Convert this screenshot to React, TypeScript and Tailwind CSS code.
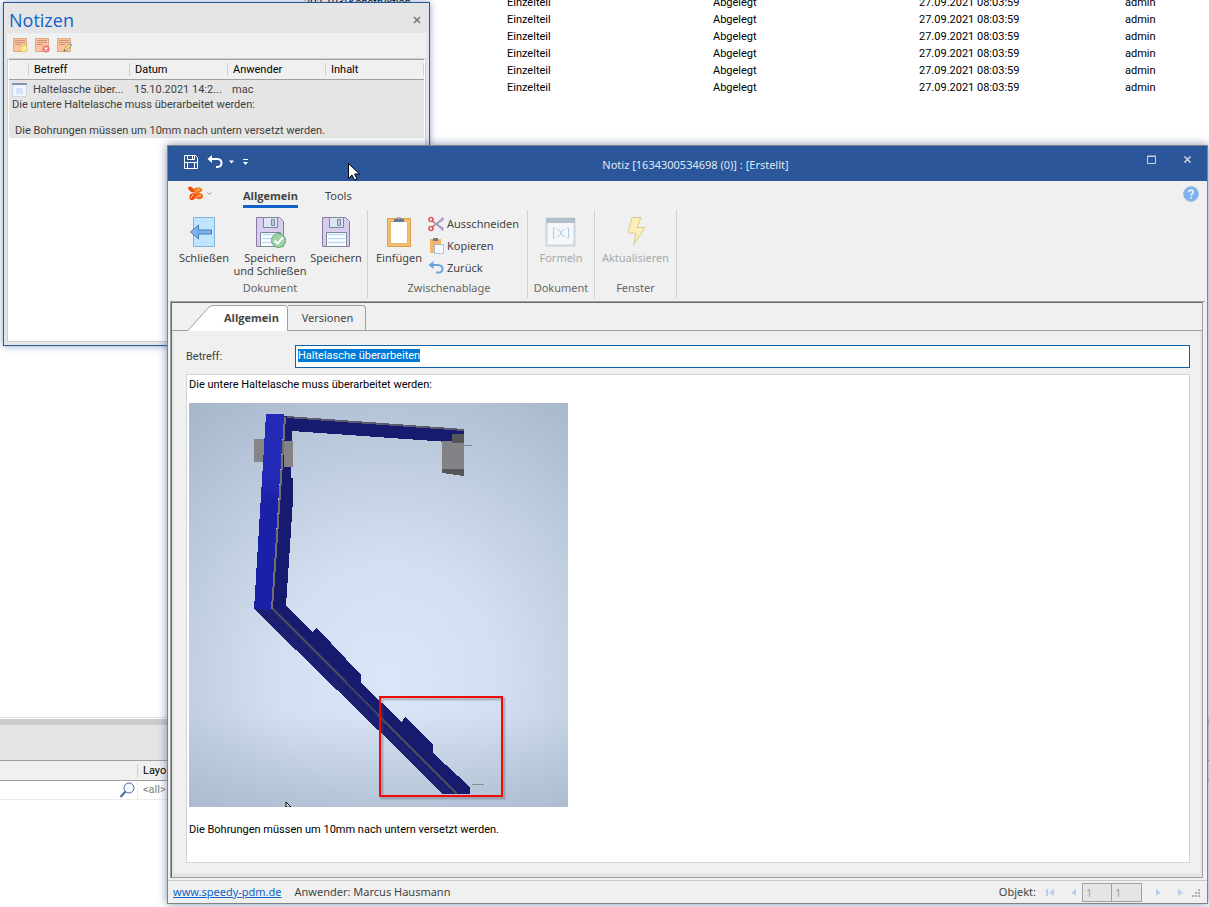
import { useEffect, useRef } from 'react';
import type { ReactNode } from 'react';

const parts = Array.from({ length: 6 }, (_, i) => ({
  folder: i === 0 ? '202.103\\Konstruktion' : '',
  type: 'Einzelteil',
  state: 'Abgelegt',
  date: '27.09.2021 08:03:59',
  user: 'admin',
}));

function PartsTable() {
  return (
    <table className="-mt-[6px] w-full table-fixed text-[11px] leading-[17px] text-black">
      <colgroup>
        <col className="w-[507px]" />
        <col className="w-[206px]" />
        <col className="w-[206px]" />
        <col className="w-[206px]" />
        <col />
      </colgroup>
      <tbody>
        {parts.map((part, index) => (
          <tr key={index} className="h-[17px]">
            <td className="pl-[304px]">{part.folder}</td>
            <td>{part.type}</td>
            <td>{part.state}</td>
            <td>{part.date}</td>
            <td>{part.user}</td>
          </tr>
        ))}
      </tbody>
    </table>
  );
}

function LayoutPane() {
  return (
    <section className="h-[190px] border-t border-[#e0e0e0] bg-white pt-px text-[11px]">
      <div className="h-[6px] bg-[#cbcbcb]" />
      <div className="h-[35px] bg-[#e5e5e5]" />
      <div className="flex h-[21px] border-y border-[#a0a0a0] bg-[#f0f0f0] py-[3px]">
        <div className="w-[138px] border-r border-[#d0d0d0]" />
        <span className="pl-[5px] leading-[14px] text-black">Layout</span>
      </div>
      <div className="flex h-[19px] border-b border-[#ececec]">
        <div className="flex w-[138px] justify-end border-r border-[#ececec] pr-[2px] pt-px">
          <svg className="h-4 w-4" viewBox="0 0 16 16" fill="none" stroke="#4c6ca0">
            <circle cx="10" cy="6" r="5" fill="#f4f7fc" />
            <path d="M6.5 9.5 1.5 15" strokeWidth="2" />
          </svg>
        </div>
        <span className="pl-[5px] leading-[18px] text-[#808080]">&lt;all&gt;</span>
      </div>
    </section>
  );
}

function NoteIcon({ kind }: { kind: 'new' | 'delete' | 'edit' }) {
  return (
    <svg className="h-4 w-4" viewBox="0 0 16 16">
      <path d="M1.5 1.5h13v13h-13z" fill="#fdc39b" stroke="#d9a98a" />
      <path d="M3 3.5h10M3 5.5h10M3 7.5h6" stroke="#c99478" />
      {kind === 'new' && (
        <path d="m12 8 2.5 1 1.3 2.5-1 2.5-2.6 1.5-2.6-1-1.4-2.7 1.2-2.6z" fill="#f8ec90" stroke="#d8bd62" strokeWidth=".7" />
      )}
      {kind === 'delete' && (
        <>
          <circle cx="12" cy="12" r="3.5" fill="#ee6b72" />
          <path d="m10.5 10.5 3 3m0-3-3 3" stroke="#fff" strokeWidth="1.2" />
        </>
      )}
      {kind === 'edit' && (
        <>
          <path d="m8 14 1-3 5-5 2 2-5 5z" fill="#f5da88" stroke="#a98d5c" strokeWidth=".7" />
          <path d="m13 7 1.2-1.2 2 2L15 9z" fill="#8fa6c8" />
          <path d="m7.6 14.4.6-1.8 1.2 1.2z" fill="#555" />
        </>
      )}
    </svg>
  );
}

const noteActions = [
  { kind: 'new', label: 'Neue Notiz' },
  { kind: 'delete', label: 'Notiz löschen' },
  { kind: 'edit', label: 'Notiz bearbeiten' },
] as const;

function NotesPanel() {
  return (
    <section className="absolute left-[3px] top-[2px] flex h-[344px] w-[427px] flex-col border border-[#2b579a] bg-[#e5e5e5] px-[3px] pb-[3px] shadow-[0_0_7px_rgba(43,87,154,0.55)]">
      <header className="flex h-[30px] items-center justify-between pl-[2px] pr-[3px]">
        <h2 className="pt-[3px] font-['Open_Sans',sans-serif] text-[18px] leading-6 text-[#0f63c9]">Notizen</h2>
        <button type="button" aria-label="Schließen" className="pt-[3px]">
          <svg className="h-3 w-3" viewBox="0 0 12 12" fill="none" stroke="#777" strokeWidth="1.600">
            <path d="m3 3 6 6m0-6-6 6" />
          </svg>
        </button>
      </header>
      <div className="flex h-[25px] items-center gap-[6px] bg-[#f0f0f0] pb-[2px] pl-[5px]">
        {noteActions.map((action) => (
          <button key={action.kind} type="button" aria-label={action.label}>
            <NoteIcon kind={action.kind} />
          </button>
        ))}
      </div>
      <div className="flex-1 border border-[#cfcfcf] bg-white px-px text-[11px]">
        <table className="w-full table-fixed border-t border-[#a0a0a0] bg-[#f0f0f0] text-left">
          <colgroup>
            <col className="w-[20px]" />
            <col className="w-[101px]" />
            <col className="w-[98px]" />
            <col className="w-[98px]" />
            <col />
          </colgroup>
          <thead>
            <tr className="h-5 leading-[13px] text-black">
              {['', 'Betreff', 'Datum', 'Anwender', 'Inhalt'].map((title) => (
                <th key={title} className="p-0 font-normal">
                  <span className="block h-[13px] border-r border-[#d0d0d0] pl-[5px]">{title}</span>
                </th>
              ))}
            </tr>
          </thead>
          <tbody className="border-t border-[#a0a0a0] bg-[#e5e5e5] text-[#404040]">
            <tr className="h-[18px] leading-[13px]">
              <td className="pl-[3px] pt-[2px]">
                <svg className="h-[14px] w-[15px]" viewBox="0 0 15 14">
                  <path d="M.5 1.5h14v12H.5z" fill="#eef5fe" stroke="#cdd6e2" />
                  <path d="M0 0h15v2H0z" fill="#8493ab" />
                  <path d="M4 5h7v6H4z" fill="#d2e3f9" />
                </svg>
              </td>
              <td className="truncate pl-1 pt-[2px]">Haltelasche über...</td>
              <td className="truncate pl-1 pt-[2px]">15.10.2021 14:2...</td>
              <td className="pl-1 pt-[2px]">mac</td>
              <td />
            </tr>
            <tr>
              <td colSpan={5} className="h-[40px] whitespace-pre pl-[3px] align-top leading-[13px]">
                <p>Die untere Haltelasche muss überarbeitet werden:</p>
                <p className="pl-[3px] pt-[13px]">Die Bohrungen müssen um 10mm nach untern versetzt werden.</p>
              </td>
            </tr>
          </tbody>
        </table>
      </div>
    </section>
  );
}

function TitleBar() {
  return (
    <header className="grid h-[35px] shrink-0 grid-cols-[1fr_auto_1fr] items-center bg-[#2b579a]">
      <div className="flex items-center pb-[3px] pl-[15px] text-white">
        <button type="button" aria-label="Speichern">
          <svg className="h-4 w-4" viewBox="0 0 16 16" fill="none" stroke="#fff">
            <path d="M1.5 1.5h11l2 2v11h-13zM4.5 1.5v4h7v-4M1.5 8.5h13M9.5 2v3M4.5 8.5v6M11.5 8.5v6" />
          </svg>
        </button>
        <button type="button" aria-label="Rückgängig" className="ml-2">
          <svg className="h-4 w-4" viewBox="0 0 16 16" fill="none" stroke="#fff" strokeWidth="2">
            <path d="M1.500 5h9q4 .3 4 4t-4 4H9" />
            <path d="M5 1v8L.5 5z" fill="#fff" stroke="none" />
          </svg>
        </button>
        <button type="button" aria-label="Verlauf" className="ml-[6px]">
          <svg className="h-2 w-[6px]" viewBox="0 0 6 8">
            <path d="M0 2.500h5L2.500 5.500z" fill="#fff" />
          </svg>
        </button>
        <button type="button" aria-label="Symbolleiste anpassen" className="ml-2">
          <svg className="h-2 w-[6px]" viewBox="0 0 6 8">
            <path d="M0 1h5v1H0zM0 4h5L2.500 7z" fill="#fff" />
          </svg>
        </button>
      </div>
      <h1 className="pl-4 pt-1 font-['Noto_Sans',sans-serif] text-[11px] text-[#dfe7f3]">
        Notiz [1634300534698 (0)] : [Erstellt]
      </h1>
      <div className="flex justify-end gap-6 pb-[7px] pr-[13px]">
        <button type="button" aria-label="Maximieren">
          <svg className="h-3 w-3" viewBox="0 0 12 12" fill="none" stroke="#d0d3d8">
            <path d="M1.500 2.500h8v7h-8zM1 2h9" />
          </svg>
        </button>
        <button type="button" aria-label="Schließen">
          <svg className="h-3 w-3" viewBox="0 0 12 12" fill="none" stroke="#d0d3d8" strokeWidth="1.600">
            <path d="m2.500 2.500 6 6m0-6-6 6" />
          </svg>
        </button>
      </div>
    </header>
  );
}

function RibbonTabs() {
  return (
    <nav className="flex h-[29px] items-start pl-5 pr-2 text-[11px]">
      <button type="button" aria-label="Menü" className="flex items-center gap-[3px] pt-[5px]">
        <svg className="h-4 w-4" viewBox="0 0 16 16">
          <path d="M0 1C3 0 6 1.500 7 6.500 3 6.500 0 4.500 0 1z" fill="#f04a0c" />
          <path d="M5.500 3C8 1 13 1 14 3c.8 2.500-2 4-6.500 4.500z" fill="#f57a16" />
          <path d="M1.500 11C1 8 4 6.500 8 7.500c.5 4-1.500 6.500-4 6.500s-2.300-1.300-2.500-3z" fill="#ef4a0a" />
          <path d="M7.500 7.500C12 6 15.500 7.500 15 10.500c-.4 2.500-4 3.500-7 2z" fill="#f4690f" />
          <path d="M8 5c1.500-1.300 3-1.800 4-1M3.500 12c-.3-1.800.8-2.800 2.500-3M9 10.500l4-1" stroke="#fbd3bd" fill="none" />
        </svg>
        <svg className="h-[6px] w-[5px]" viewBox="0 0 5 6" fill="none" stroke="#8a8a8a">
          <path d="m.5 1.500 2 2 2-2" />
        </svg>
      </button>
      <button type="button" className="ml-[31px] border-b-[3px] border-[#0f63c9] pb-[1px] pt-[7px] font-['Open_Sans',sans-serif] font-bold leading-4 text-[#444]">
        Allgemein
      </button>
      <button type="button" className="ml-[27px] pt-[7px] leading-4 text-[#444]">
        Tools
      </button>
      <button type="button" aria-label="Hilfe" className="ml-auto pt-[5px]">
        <svg className="h-4 w-4" viewBox="0 0 16 16">
          <circle cx="8" cy="8" r="7.500" fill="#7fb0ee" stroke="#a9bfdb" />
          <path d="M5.800 6.300c0-3 4.600-2.800 4.500-.1C10.200 7.800 8 7.800 8 9.500M8 11v1.500" fill="none" stroke="#fff" strokeWidth="1.500" />
        </svg>
      </button>
    </nav>
  );
}

function CloseIcon() {
  return (
    <svg className="h-8 w-8" viewBox="0 0 32 32">
      <path d="M5.500 1.500h21v29h-21z" fill="#bfe4fe" stroke="#80b3dd" />
      <path d="m2.500 16 8-7v5h13v4h-13v5z" fill="#7fb2f1" stroke="#4d79b4" />
    </svg>
  );
}

function SaveIcon({ checked = false }: { checked?: boolean }) {
  return (
    <svg className="h-8 w-8" viewBox="0 0 32 32">
      <path d="M2.500 1.500h23l4 4v25h-27z" fill="#d9cdef" stroke="#897ba5" />
      <path d="M9.500 1.500h14v10h-14z" fill="#dbe6f2" stroke="#7d8698" />
      <path d="M17.500 3.500h3v6h-3z" fill="#bacbe0" stroke="#7d8698" />
      <path d="M6.500 16.500h20v14h-20z" fill="#fff" stroke="#7d8698" />
      <path d="M8 18.500h17M8 22.500h17M8 26.500h17" stroke="#b9dcf4" strokeWidth="1.500" />
      {checked && (
        <>
          <circle cx="24.500" cy="24.500" r="7" fill="#9fd3a4" stroke="#5fa977" />
          <path d="m20.500 24.500 3 3 5.500-6" fill="none" stroke="#fff" strokeWidth="2" />
        </>
      )}
    </svg>
  );
}

function PasteIcon() {
  return (
    <svg className="h-8 w-8" viewBox="0 0 32 32">
      <path d="M4.500 2.500h23v28h-23z" fill="#f6bf6e" stroke="#dba04d" />
      <path d="M7.500 5.500h17v22h-17z" fill="#fff" stroke="#e2b478" />
      <path d="M11 6V3h3a2 2 0 0 1 4 0h3v3z" fill="#6a7b94" />
      <path d="M15.500 1.500h1V3h-1z" fill="#fff" />
    </svg>
  );
}

function FormulaIcon() {
  return (
    <svg className="h-8 w-8" viewBox="0 0 32 32" fill="none">
      <path d="M1.500 2.500h28v27h-28z" fill="#f5f7fa" stroke="#ced5dc" strokeWidth="2" />
      <path d="M1 2h29v5H1z" fill="#b2bec9" />
      <path d="M10 12H8.500v10H10M22 12h1.500v10H22M12 13.500c4-1 4 7.500 8 7M20 13.500c-4-1-4 7.500-8 7" stroke="#a9cbe9" />
    </svg>
  );
}

function BoltIcon() {
  return (
    <svg className="h-8 w-8" viewBox="0 0 32 32">
      <path d="M12 1.500h9l-4 10h8L13.500 29l2.500-12H8z" fill="#fbeeb9" stroke="#dccb92" />
    </svg>
  );
}

function CutIcon() {
  return (
    <svg className="h-4 w-4" viewBox="0 0 16 16" fill="none">
      <path d="M5 5.500 15 14.500V12zM5 10.500 15 1.500V4z" fill="#c3b5de" stroke="#9a8cba" />
      <circle cx="3" cy="3.500" r="2" stroke="#e0595e" strokeWidth="1.600" />
      <circle cx="3" cy="12.500" r="2" stroke="#e0595e" strokeWidth="1.600" />
      <path d="m4.500 5 2 2m-2 4 2-2" stroke="#e0595e" strokeWidth="1.500" />
    </svg>
  );
}

function CopyIcon() {
  return (
    <svg className="h-4 w-4" viewBox="0 0 16 16">
      <path d="M2 1h11v14H2z" fill="#f3b765" />
      <path d="M5 0h5v3H5z" fill="#6a7b94" />
      <path d="M6.500 6.500h9v9h-9z" fill="#f5faff" stroke="#87aed8" strokeDasharray="2 1" />
    </svg>
  );
}

function BackIcon() {
  return (
    <svg className="h-4 w-4" viewBox="0 0 16 16" fill="none" stroke="#6f9fdc" strokeWidth="2">
      <path d="M2 5h8q4.500.3 4.500 4T10 12.500H8" />
      <path d="M5.500 1v8L.5 5z" fill="#6f9fdc" stroke="none" />
    </svg>
  );
}

function RibbonGroup({ title, className, children }: { title: string; className: string; children: ReactNode }) {
  return (
    <section className={`flex flex-col justify-between border-r border-[#d2d2d2] pb-[2px] ${className}`}>
      <div className="flex">{children}</div>
      <h3 className="text-center leading-4 text-[#666]">{title}</h3>
    </section>
  );
}

function LargeButton({ icon, className, disabled, children }: { icon: ReactNode; className: string; disabled?: boolean; children: ReactNode }) {
  return (
    <button
      type="button"
      disabled={disabled}
      className={`flex flex-col items-center gap-[3px] whitespace-nowrap pt-[6px] leading-[13px] text-[#444] disabled:text-[#a8a8a8] ${className}`}
    >
      {icon}
      <span>{children}</span>
    </button>
  );
}

const clipboardActions = [
  { icon: CutIcon, text: 'Ausschneiden' },
  { icon: CopyIcon, text: 'Kopieren' },
  { icon: BackIcon, text: 'Zurück' },
];

function Ribbon() {
  return (
    <div className="flex h-[88px] shrink-0 text-[11px]">
      <RibbonGroup title="Dokument" className="w-[200px] pl-2 pr-[3px]">
        <LargeButton icon={<CloseIcon />} className="w-14">Schließen</LargeButton>
        <LargeButton icon={<SaveIcon checked />} className="w-[76px]">
          Speichern
          <br />
          und Schließen
        </LargeButton>
        <LargeButton icon={<SaveIcon />} className="w-14">Speichern</LargeButton>
      </RibbonGroup>
      <RibbonGroup title="Zwischenablage" className="w-[160px] pl-[3px]">
        <LargeButton icon={<PasteIcon />} className="w-14">Einfügen</LargeButton>
        <div className="flex flex-col pl-px pt-[3px]">
          {clipboardActions.map((action) => {
            const Icon = action.icon;
            return (
              <button key={action.text} type="button" className="flex h-[22px] items-center gap-[3px] text-[#444]">
                <Icon />
                {action.text}
              </button>
            );
          })}
        </div>
      </RibbonGroup>
      <RibbonGroup title="Dokument" className="w-[67px]">
        <LargeButton icon={<FormulaIcon />} className="w-full" disabled>Formeln</LargeButton>
      </RibbonGroup>
      <RibbonGroup title="Fenster" className="w-[82px]">
        <LargeButton icon={<BoltIcon />} className="w-full" disabled>Aktualisieren</LargeButton>
      </RibbonGroup>
    </div>
  );
}

function BracketDrawing() {
  return (
    <svg className="block h-[404px] w-[379px]" viewBox="0 0 379 404" role="img" aria-label="Haltelasche">
      <defs>
        <radialGradient id="sky" gradientUnits="userSpaceOnUse" cx="200" cy="275" r="340" gradientTransform="translate(200 275) scale(.95 1) translate(-200 -275)">
          <stop offset="0" stopColor="#dbe6f8" />
          <stop offset=".35" stopColor="#d3dff0" />
          <stop offset="1" stopColor="#a7b7cc" />
        </radialGradient>
        <linearGradient id="floor" x1="0" y1="0" x2="0" y2="1">
          <stop offset="0" stopColor="#a5b5ca" stopOpacity="0" />
          <stop offset="1" stopColor="#a5b5ca" stopOpacity=".65" />
        </linearGradient>
        <linearGradient id="beam" x1="0" y1="0" x2="0" y2="1">
          <stop offset=".3" stopColor="#232bb6" />
          <stop offset=".45" stopColor="#1a20a8" />
        </linearGradient>
      </defs>
      <path d="M0 0h379v404H0z" fill="url(#sky)" />
      <path d="M0 310h379v94H0z" fill="url(#floor)" />
      <g shapeRendering="crispEdges">
        <path d="M65 36h10v23H65z" fill="#85858a" />
        <path d="M95 13 275 26v13h-16L103 28v10l-1 26v11h2v22l-7 106-13 4z" fill="#171b70" />
        <path d="m98 14 177 13" stroke="#5a596f" strokeWidth="2" fill="none" />
        <path d="M95 38h9v26h-9z" fill="#828287" />
        <path d="M253 38h22v28h-22z" fill="#828287" />
        <path d="M263 31h12v9h-12zM253 66h22v7l-22-3z" fill="#55555a" />
        <path d="M275 42h8" stroke="#84868d" />
        <path d="m84 206 13-3 26 26 5-4 44 47v8l41 39 3-5 28 28v8l37 34v7h-13z" fill="#171b70" />
        <path d="M65 206h19l187 185h-18l-64-64z" fill="#1b2070" />
        <path d="m84 206 184 185" stroke="#484b59" strokeWidth="2" />
        <path d="M77 11h18v3L82 207l-17-1z" fill="url(#beam)" />
        <path d="M96 14 91 90 83 206" stroke="#716e74" strokeWidth="2" fill="none" />
        <path d="M283 381h12" stroke="#888b92" />
      </g>
      <path d="M193 296h122v99H193z" fill="none" stroke="#555" strokeOpacity=".3" strokeWidth="3" />
      <path d="M191 294h122v99H191z" fill="none" stroke="#f20808" strokeWidth="2" />
      <path d="M97 399v5h5z" fill="#fff" stroke="#000" />
    </svg>
  );
}

function NoteForm() {
  const subjectRef = useRef<HTMLInputElement>(null);

  useEffect(() => {
    subjectRef.current?.select();
  }, []);

  return (
    <div className="flex min-h-0 flex-1 flex-col border border-l-[#696969] border-r-[#a0a0a0] border-t-[#696969] border-b-[#a0a0a0]">
      <div className="flex h-[28px] shrink-0 items-end border-b border-[#a0a0a0] pl-[15px] font-['Noto_Sans',sans-serif] text-[11px] text-[#444]">
        <button type="button" className="relative -mb-px h-[26px] w-[101px] pl-[37px] text-left font-['Open_Sans',sans-serif] font-bold">
          <svg className="absolute inset-0 h-[26px] w-[101px]" viewBox="0 0 101 26">
            <path d="M.5 26 22 2Q24 .5 26 .5H98q2.500 0 2.500 3V26" fill="#fff" stroke="#a0a0a0" />
          </svg>
          <span className="relative">Allgemein</span>
        </button>
        <button type="button" className="h-[25px] w-[78px] rounded-tr-sm border-r border-t border-[#a0a0a0] pl-[2px]">
          Versionen
        </button>
      </div>
      <div className="flex min-h-0 flex-1 flex-col gap-[6px] border-x-2 border-b-4 border-[#e5e5e5] pb-[10px] pl-3 pr-[10px] pt-[14px] text-[11px]">
        <div className="flex items-center">
          <label htmlFor="subject" className="w-[109px] shrink-0 pt-[2px] text-[#404040]">Betreff:</label>
          <input
            ref={subjectRef}
            id="subject"
            type="text"
            defaultValue="Haltelasche überarbeiten"
            className="h-[23px] min-w-0 flex-1 border border-[#0a63b0] bg-white pb-[3px] pl-[2px] text-black outline-none selection:bg-[#0078d7fe] selection:text-white"
          />
        </div>
        <article className="min-h-0 flex-1 border border-[#d4d4d4] bg-white px-[2px] pt-[2px] leading-[15px] text-black">
          <p>Die untere Haltelasche muss überarbeitet werden:</p>
          <div className="pb-[15px] pt-[11px]">
            <BracketDrawing />
          </div>
          <p>Die Bohrungen müssen um 10mm nach untern versetzt werden.</p>
        </article>
      </div>
    </div>
  );
}

function StatusBar() {
  return (
    <footer className="flex h-[23px] shrink-0 items-center border-t border-[#c8c8c8] pl-[5px] pr-[6px] text-[11px] text-[#444]">
      <a href="#home" className="text-[#0f63c9] underline">www.speedy-pdm.de</a>
      <span className="ml-[13px]">Anwender: Marcus Hausmann</span>
      <label htmlFor="record" className="ml-auto">Objekt:</label>
      <button type="button" aria-label="Erster" className="ml-[10px]" disabled>
        <svg className="h-[9px] w-[9px]" viewBox="0 0 9 9" fill="#b7d0ee">
          <path d="M0 1h2v7H0zM8 1v7L3 4.500z" />
        </svg>
      </button>
      <button type="button" aria-label="Zurück" className="ml-4" disabled>
        <svg className="h-[9px] w-[5px]" viewBox="0 0 5 9" fill="#b7d0ee">
          <path d="M5 1v7L0 4.500z" />
        </svg>
      </button>
      <input id="record" disabled defaultValue="1" className="ml-[6px] h-[19px] w-[30px] border border-[#a0a0a0] bg-[#e5e5e5] pl-[3px] text-[#a0a0a0]" />
      <input aria-label="Anzahl" disabled defaultValue="1" className="-ml-px h-[19px] w-[31px] border border-[#a0a0a0] bg-[#e5e5e5] pl-[3px] text-[#a0a0a0]" />
      <button type="button" aria-label="Weiter" className="ml-[14px]" disabled>
        <svg className="h-[9px] w-[5px]" viewBox="0 0 5 9" fill="#b7d0ee">
          <path d="M0 1v7l5-3.500z" />
        </svg>
      </button>
      <button type="button" aria-label="Letzter" className="ml-[17px]" disabled>
        <svg className="h-[9px] w-[5px]" viewBox="0 0 5 9" fill="#b7d0ee">
          <path d="M0 1v7l5-3.500z" />
        </svg>
      </button>
      <svg className="ml-[9px] mt-[3px] h-[9px] w-[9px]" viewBox="0 0 9 9" fill="#b0b0b0">
        <path d="M6 0h2v2H6zM3 3h2v2H3zM6 3h2v2H6zM0 6h2v2H0zM3 6h2v2H3zM6 6h2v2H6z" />
      </svg>
    </footer>
  );
}

function NoteWindow() {
  return (
    <section className="absolute bottom-[3px] left-[167px] right-px top-[145px] flex flex-col border border-[#7f8487] bg-[#f0f0f0] font-['Noto_Sans',sans-serif] shadow-[0_0_9px_rgba(43,70,120,0.6)]">
      <TitleBar />
      <RibbonTabs />
      <Ribbon />
      <div className="mx-[2px] mb-[2px] mt-[3px] flex min-h-0 flex-1 flex-col border-l border-t border-[#a0a0a0] pr-[2px] font-['Roboto',sans-serif]">
        <NoteForm />
      </div>
      <StatusBar />
    </section>
  );
}

export default function App() {
  return (
    <main className="relative flex min-h-screen flex-col overflow-hidden bg-white font-['Roboto',Arial,sans-serif]">
      <div className="flex-1">
        <PartsTable />
      </div>
      <LayoutPane />
      <NotesPanel />
      <NoteWindow />
      <svg className="absolute left-[348px] top-[163px] h-[18px] w-[12px]" viewBox="0 0 12 18">
        <path d="M.5.5v15l3.500-3.500 2.500 5 2.500-1-2.500-5h5z" fill="#fff" stroke="#000" />
      </svg>
    </main>
  );
}
